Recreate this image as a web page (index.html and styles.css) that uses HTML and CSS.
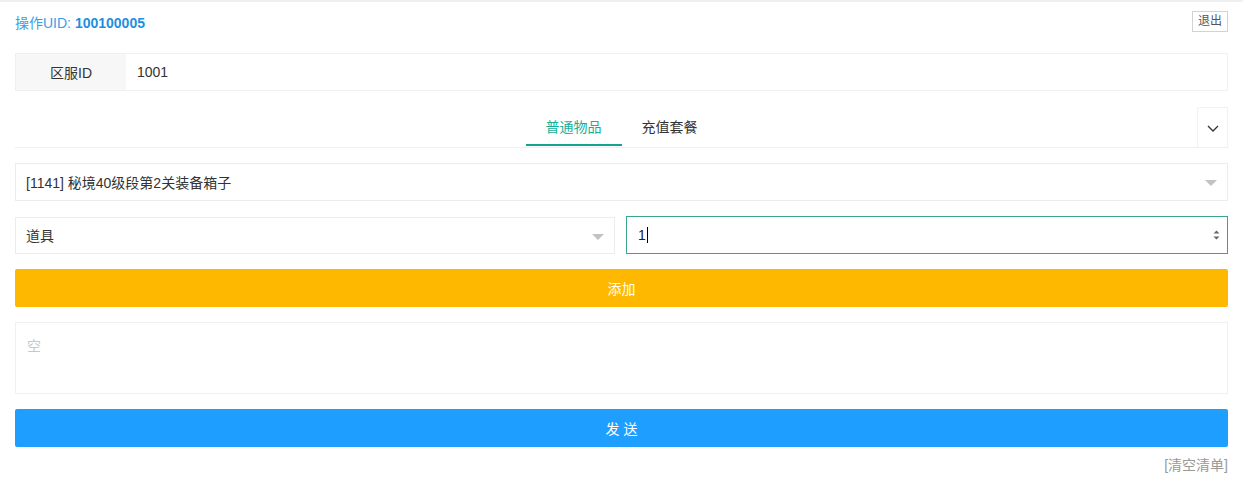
FILE: index.html
```html
<!DOCTYPE html>
<html lang="zh-CN">
<head>
    <meta charset="UTF-8">
    <meta name="viewport" content="width=device-width, initial-scale=1.0">
    <title>GM 发送物品</title>
    <link rel="stylesheet" href="styles.css">
</head>
<body>

<div class="page">
    <div class="top-bar">
        <div class="uid">操作UID: <b>100100005</b></div>
        <button class="logout">退出</button>
    </div>

    <div class="field-row">
        <div class="field-label">区服ID</div>
        <div class="field-value">1001</div>
    </div>

    <div class="tabs">
        <ul class="tab-title">
            <li class="active">普通物品</li>
            <li>充值套餐</li>
        </ul>
        <span class="tab-more">
            <svg width="14" height="14" viewBox="0 0 14 14"><path d="M2 5 L7 10 L12 5" fill="none" stroke="#333" stroke-width="1.3"/></svg>
        </span>
    </div>

    <div class="select-box full">
        <span>[1141] 秘境40级段第2关装备箱子</span>
        <i class="caret"></i>
    </div>

    <div class="two-col">
        <div class="select-box">
            <span>道具</span>
            <i class="caret"></i>
        </div>
        <div class="num-input">
            <span>1<span class="cursor"></span></span>
            <span class="spin">
                <svg width="7" height="12" viewBox="0 0 7 12"><path d="M0.5 4.5 L3.5 1.5 L6.5 4.5Z M0.5 7.5 L3.5 10.5 L6.5 7.5Z" fill="#666"/></svg>
            </span>
        </div>
    </div>

    <button class="btn btn-warm">添加</button>

    <div class="item-list">
        <span class="empty">空</span>
    </div>

    <button class="btn btn-blue">发 送</button>

    <div class="clear-link">[清空清单]</div>
</div>

</body>
</html>
```

FILE: styles.css
```css
body {
    margin: 0;
    font-family: "Liberation Sans", "Noto Sans CJK SC", sans-serif;
    font-size: 14px;
    color: #333;
    background: #fff;
}
.page {
    padding: 9px 15px 0;
    border-top: 2px solid #f0f0f0;
}
.top-bar {
    display: flex;
    justify-content: space-between;
    align-items: center;
    height: 21px;
}
.uid {
    color: #3a9ee8;
    font-size: 14px;
}
.uid b {
    color: #1e8fe0;
}
.logout {
    font-family: inherit;
    font-size: 12px;
    color: #555;
    background: #fff;
    border: 1px solid #d2d2d2;
    height: 21px;
    padding: 0 5px;
    line-height: 19px;
}
.field-row {
    display: flex;
    height: 38px;
    margin-top: 21px;
    border: 1px solid #f0f0f0;
    box-sizing: border-box;
}
.field-label {
    width: 110px;
    background: #f7f7f7;
    display: flex;
    align-items: center;
    justify-content: center;
}
.field-value {
    display: flex;
    align-items: center;
    padding-left: 11px;
}
.tabs {
    position: relative;
    margin-top: 16px;
    height: 40px;
    border-bottom: 1px solid #f0f0f0;
    display: flex;
    justify-content: center;
}
.tab-title {
    display: flex;
    list-style: none;
    margin: 0;
    padding: 0;
    margin-top: 3px;
}
.tab-title li {
    padding: 0 20px;
    line-height: 34px;
    height: 34px;
}
.tab-title li.active {
    color: #16b09a;
    border-bottom: 2px solid #16a290;
}
.tab-more {
    position: absolute;
    right: 0;
    top: 0;
    width: 31px;
    height: 40px;
    border: 1px solid #f2f2f2;
    border-bottom: none;
    box-sizing: border-box;
    display: flex;
    align-items: center;
    justify-content: center;
    background: #fff;
}
.select-box {
    position: relative;
    height: 38px;
    border: 1px solid #ececec;
    box-sizing: border-box;
    display: flex;
    align-items: center;
    padding-left: 10px;
}
.select-box.full {
    margin-top: 15px;
}
.caret {
    position: absolute;
    right: 10px;
    top: 16px;
    border: 6px solid transparent;
    border-top-color: #c2c2c2;
    border-bottom: none;
}
.two-col {
    display: grid;
    grid-template-columns: 600px 1fr;
    gap: 11px;
    margin-top: 15px;
    align-items: center;
}
.two-col .select-box {
    height: 37px;
}
.num-input {
    height: 38px;
    border: 1px solid #3aa48c;
    box-sizing: border-box;
    display: flex;
    align-items: center;
    justify-content: space-between;
    padding: 0 7px 0 11px;
    color: #222;
}
.cursor {
    display: inline-block;
    width: 1px;
    height: 16px;
    background: #000;
    vertical-align: -3px;
    margin-left: 1px;
}
.spin {
    display: flex;
}
.btn {
    display: block;
    width: 100%;
    height: 38px;
    border: none;
    border-radius: 2px;
    color: #fff;
    font-family: inherit;
    font-size: 14px;
}
.btn-warm {
    background: #ffb800;
    margin-top: 15px;
}
.item-list {
    margin-top: 15px;
    height: 72px;
    border: 1px solid #f0f0f0;
    box-sizing: border-box;
    padding: 12px 11px;
}
.empty {
    color: #c8c8c8;
}
.btn-blue {
    background: #1e9fff;
    margin-top: 15px;
}
.clear-link {
    text-align: right;
    color: #999;
    font-size: 14px;
    margin-top: 7px;
}
```
